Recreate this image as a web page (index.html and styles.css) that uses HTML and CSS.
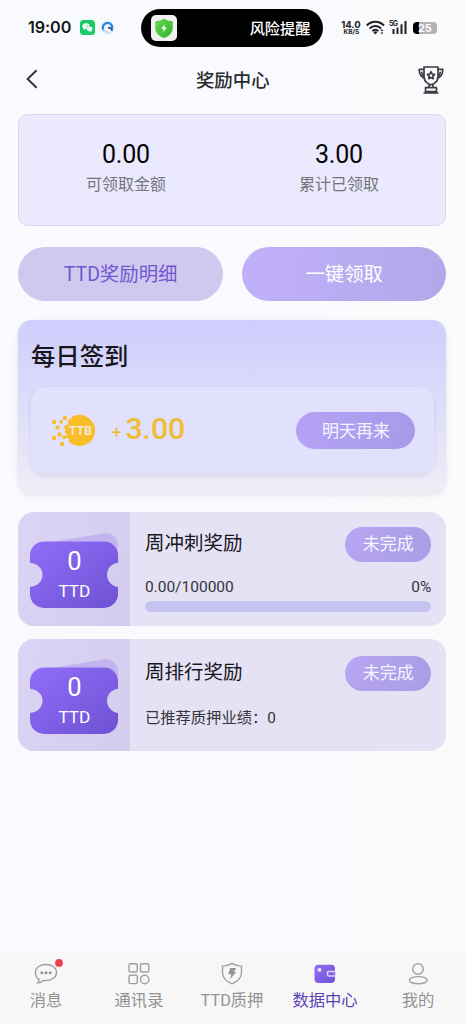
FILE: index.html
```html
<!DOCTYPE html>
<html lang="zh-CN">
<head>
<meta charset="utf-8">
<meta name="viewport" content="width=device-width, initial-scale=1">
<title>奖励中心</title>
<link rel="stylesheet" href="styles.css">
</head>
<body>
<div class="screen">
  <div class="status">
    <div class="status-left">
      <span class="clock">19:00</span>
      <svg class="app-icon" viewBox="0 0 15 15"><rect width="15" height="15" rx="3.5" fill="#1bc968"/><ellipse cx="6.1" cy="6.2" rx="3.6" ry="3" fill="#fff"/><path d="M3.8 8l-.4 2 2-1z" fill="#fff"/><ellipse cx="9.5" cy="8.8" rx="3.2" ry="2.6" fill="#fff" stroke="#1bc968" stroke-width=".6"/><path d="M11 10.5l.8 1.5-2-.7z" fill="#fff"/><g fill="#1bc968"><circle cx="4.9" cy="5.3" r=".5"/><circle cx="7.3" cy="5.3" r=".5"/><circle cx="8.5" cy="8.2" r=".4"/><circle cx="10.5" cy="8.2" r=".4"/></g></svg>
      <svg class="app-icon cloud" viewBox="0 0 15 15"><rect width="15" height="15" rx="3.5" fill="#f5f7fa"/><path d="M2 10.500c2-1.900 4-.3 5.600 1.100s3.500 1.500 5.400-.1C12 15 4 14 2 10.500z" fill="#b9dcf8"/><path d="M3.200 9.800A4.800 4.800 0 1 1 12.200 8.800" fill="none" stroke="#2c84e6" stroke-width="2.400"/><path d="M8 7.600c2 0 3.900 1 4.300 3.400" fill="none" stroke="#1a559f" stroke-width="1.600"/></svg>
    </div>
    <div class="island">
      <svg class="guard" viewBox="0 0 26 26"><defs><linearGradient id="green" x2="1" y2="1"><stop stop-color="#66d94e"/><stop offset="1" stop-color="#30b42c"/></linearGradient></defs><rect width="26" height="26" rx="5" fill="#f0f1f0"/><path d="M13 3.600c2.500 1.800 5 2.400 8.700 2.600v7.200c0 4.500-3.800 7.600-8.700 9.700-4.900-2.100-8.700-5.200-8.700-9.700V6.200C8 6 10.500 5.400 13 3.600z" fill="url(#green)"/><path d="M13.800 9.300l-3.600 4.400h2.500l-.7 3.500 3.900-4.600h-2.500z" fill="#fff"/></svg>
      <span>风险提醒</span>
    </div>
    <div class="status-right">
      <div class="speed"><b>14.0</b><small>KB/S</small></div>
      <svg class="wifi" viewBox="0 0 19 16"><g fill="none" stroke="#202124" stroke-width="1.900"><path d="M.7 5.500C5.400.4 13.300.4 18 5.500M3.600 8.500c3.200-3.400 8.300-3.400 11.500 0M6.300 11.100c1.800-1.900 4.300-1.900 6.100 0"/></g><path d="M7.300 12.300a3 3 0 0 1 4.100 0l-2 2.100zM14.400 11l1.500-1.900 1.500 1.900zM14.400 12.400l1.500 1.900 1.500-1.900z" fill="#202124"/></svg>
      <svg class="signal" viewBox="0 0 19 16"><text x="0" y="6.300" font-size="7" font-weight="700" textLength="9">5G</text><g fill="#202124"><rect x="3.500" y="9" width="2" height="5"/><rect x="7.500" y="7.500" width="2" height="6.500"/><rect x="11.500" y="4.300" width="2" height="9.700"/><rect x="15.500" y="1" width="2" height="13"/></g></svg>
      <div class="battery">25</div>
    </div>
  </div>

  <header class="header">
    <svg class="back" viewBox="0 0 12 20"><path d="M10.600 1.200L1.600 10l9 8.800" fill="none" stroke="#303238" stroke-width="1.900"/></svg>
    <h1>奖励中心</h1>
    <svg class="trophy" viewBox="0 0 26 28" fill="none" stroke="#3b3d42" stroke-width="1.700" stroke-linejoin="round"><path d="M6 1h14v9.500c0 4-2 7-7 8.300-5-1.300-7-4.300-7-8.300zM6 3.300H1.200c0 5 1.200 7.800 6.200 9.500M3.500 5.700c.2 2.500 1 3.500 2.700 4.500M20 3.300h4.800c0 5-1.200 7.800-6.200 9.500M22.500 5.700c-.2 2.500-1 3.500-2.700 4.500M11 18.300v3.400h4v-3.400M7.500 21.700h11v4h-11zM5.500 27h15"/><path d="M13 5.700l1.100 2.300 2.500.4-1.800 1.800.4 2.500-2.200-1.200-2.200 1.200.4-2.500-1.800-1.800 2.500-.4z"/></svg>
  </header>

  <main>
    <section class="totals">
      <div class="total"><strong>0.00</strong><span>可领取金额</span></div>
      <div class="total"><strong>3.00</strong><span>累计已领取</span></div>
    </section>

    <div class="actions">
      <button class="detail">TTD奖励明细</button>
      <button class="claim">一键领取</button>
    </div>

    <section class="checkin">
      <h2>每日签到</h2>
      <div class="checkin-row">
        <svg class="coin" viewBox="0 0 44 34"><g fill="#f9be27"><path d="M18 5.500l2.500-1.500 1-1.500A15.600 15.600 0 1 1 20 29.500l-2.500-2 .5-2.500-3-1.500 1-3.500-2.500-1.500 1-3-2-2.500 2.500-2 3-.5-1.500-3z"/><rect x="1" y="6" width="4" height="4" rx="1.200"/><rect x="4.500" y="11.500" width="4" height="4" rx="1.200"/><rect x="12" y="2" width="4" height="4" rx="1.200"/><rect x="8.500" y="6" width="3.500" height="3.500" rx="1.200"/><rect x="6.500" y="18.500" width="4" height="4" rx="1.200"/><rect x="1" y="22" width="4" height="4" rx="1.200"/><rect x="9" y="28" width="4" height="4" rx="1.200"/><rect x="11.500" y="21.500" width="3.500" height="3.500" rx="1.200"/></g><text x="18" y="21.300" textLength="23" font-size="12" font-weight="700" fill="#f5e9df">TTB</text></svg>
        <div class="amount"><span>+</span><b>3.00</b></div>
        <button class="tomorrow">明天再来</button>
      </div>
    </section>

    <section class="task sprint">
      <div class="ticket-side">
        <div class="ticket">
          <svg viewBox="0 0 88 75"><defs><linearGradient id="ticket1" x2="1" y2="1"><stop stop-color="#916df9"/><stop offset="1" stop-color="#6e52d3"/></linearGradient></defs><path d="M25 8.500L73 .6c9-1.400 14 3.400 15 12.400v12H25z" fill="#c2b4f0"/><path d="M14 8.500h60a14 14 0 0 1 14 14v7.300c-6 .5-11 5.500-11 11.900s5 11.700 11 12.200v7a14 14 0 0 1-14 14H14a14 14 0 0 1-14-14v-7c7-.5 12.500-5.500 12.500-12.200S7 30.300 0 29.800v-7.300a14 14 0 0 1 14-14z" fill="url(#ticket1)"/></svg>
          <div class="ticket-label"><strong>0</strong><span>TTD</span></div>
        </div>
      </div>
      <div class="task-body">
        <div class="task-head"><h3>周冲刺奖励</h3><span class="pending">未完成</span></div>
        <div class="progress-text"><span>0.00/100000</span><span>0%</span></div>
        <div class="progress"></div>
      </div>
    </section>

    <section class="task ranking">
      <div class="ticket-side">
        <div class="ticket">
          <svg viewBox="0 0 88 75"><path d="M25 8.500L73 .6c9-1.400 14 3.400 15 12.400v12H25z" fill="#c2b4f0"/><path d="M14 8.500h60a14 14 0 0 1 14 14v7.300c-6 .5-11 5.500-11 11.900s5 11.700 11 12.200v7a14 14 0 0 1-14 14H14a14 14 0 0 1-14-14v-7c7-.5 12.500-5.500 12.500-12.200S7 30.300 0 29.800v-7.300a14 14 0 0 1 14-14z" fill="url(#ticket1)"/></svg>
          <div class="ticket-label"><strong>0</strong><span>TTD</span></div>
        </div>
      </div>
      <div class="task-body">
        <div class="task-head"><h3>周排行奖励</h3><span class="pending">未完成</span></div>
        <p class="performance">已推荐质押业绩：0</p>
      </div>
    </section>
  </main>

  <nav class="tabs">
    <a class="tab"><svg viewBox="0 0 28 26"><path d="M14 4.500c6.200 0 10.500 3.300 10.500 8s-4.300 8.100-10.500 8.100c-1 0-1.900 0-2.700-.2-1.600 1.600-3.700 2.400-5.700 2.500 1-.9 1.500-2 1.500-3.500-2.300-1.400-3.600-4-3.600-6.900 0-4.700 4.300-8 10.500-8z"/><g class="solid"><circle cx="9.800" cy="12.700" r="1.500"/><circle cx="14" cy="12.700" r="1.500"/><circle cx="18.200" cy="12.700" r="1.500"/></g><circle class="alert" cx="27" cy="2.900" r="3.900"/></svg><span>消息</span></a>
    <a class="tab"><svg viewBox="0 0 28 26"><rect x="4" y="3.700" width="8.300" height="8.300" rx="1.500"/><rect x="15.500" y="3.700" width="8.300" height="8.300" rx="1.500"/><rect x="4" y="15.300" width="8.300" height="8.300" rx="1.500"/><circle cx="19.700" cy="19.500" r="4.200"/></svg><span>通讯录</span></a>
    <a class="tab"><svg viewBox="0 0 28 26"><path d="M14 3.300c3 2 5.800 2.700 9.500 2.800v6.700c0 5-3.700 8.600-9.500 11-5.800-2.400-9.500-6-9.500-11V6.100C8.200 6 11 5.300 14 3.300z"/><path class="solid" d="M12.300 8h6l-2.300 4h2.300L12 19.300l1.200-5h-3z"/></svg><span>TTD质押</span></a>
    <a class="tab active"><svg viewBox="0 0 28 26"><defs><linearGradient id="wallet" x2="1" y2="1"><stop stop-color="#9170f6"/><stop offset="1" stop-color="#6e50d4"/></linearGradient></defs><rect x="3.500" y="4.800" width="20.500" height="18.200" rx="4" fill="url(#wallet)" stroke="none"/><rect x="6.500" y="8" width="3.800" height="3.800" rx="1" fill="#e1d9fa" stroke="none"/><rect x="16.500" y="11.500" width="8" height="4.500" rx="1" fill="#8060e5" stroke="#ddd4fa" stroke-width="1.500"/></svg><span>数据中心</span></a>
    <a class="tab"><svg viewBox="0 0 28 26"><circle cx="14" cy="9" r="5.300"/><ellipse cx="14.300" cy="20.200" rx="9" ry="3.600"/></svg><span>我的</span></a>
  </nav>
</div>
</body>
</html>
```
FILE: styles.css
```css
* { box-sizing: border-box; }
body { margin: 0; background: #f9fafd; font-family: Roboto, "Noto Sans CJK SC", sans-serif; color: #16161b; }
button { border: 0; padding: 0; font: inherit; }
h1, h2, h3, p { margin: 0; }
svg { display: block; overflow: visible; flex: none; }
.screen { height: 1024px; display: flex; flex-direction: column; background: linear-gradient(90deg, #f9fafd 70%, #f9fbfb); }

.status { height: 55px; display: flex; align-items: center; }
.status-left { width: 141.4px; padding-left: 28px; display: flex; align-items: center; }
.clock { font: 600 16.2px/20px Inter, sans-serif; width: 52px; letter-spacing: -.1px; margin-top: -1px; }
.app-icon { width: 15px; height: 15px; }
.cloud { margin-left: 5px; }
.island { width: 182px; height: 38px; padding: 0 13px 0 10px; border-radius: 19px; background: #000; color: #fff; display: flex; align-items: center; justify-content: space-between; font: 500 15.2px/24px "Noto Sans CJK SC", sans-serif; }
.island span { margin-top: -1px; }
.guard { width: 26px; height: 26px; }
.status-right { margin-left: 18.500px; display: flex; align-items: center; color: #202124; }
.speed { width: 19px; font-family: Inter, sans-serif; text-align: center; }
.speed b, .speed small { display: block; white-space: nowrap; }
.speed b { font-size: 9.500px; line-height: 8px; margin-left: -1px; }
.speed small { font-size: 6.500px; font-weight: 700; line-height: 6px; }
.wifi { width: 19px; height: 16px; margin-left: 5px; }
.signal { width: 19px; height: 16px; margin-left: 4px; font-family: Inter, sans-serif; fill: #202124; }
.battery { width: 24px; height: 12px; margin-left: 5px; border-radius: 4px; background: linear-gradient(90deg, #000 25%, #b1b2b4 25%); color: #fff; font: 700 11px/12px Inter, sans-serif; text-align: center; }

.header { height: 49px; padding: 0 20.500px 0 26px; display: flex; align-items: center; justify-content: space-between; }
.header h1 { font: 500 18.400px/28px "Noto Sans CJK SC", sans-serif; color: #292a30; margin: -2px 0 0 9px; }
.back { width: 12px; height: 20px; margin-top: -1px; }
.trophy { width: 26px; height: 28px; margin-top: 1px; }

main { flex: 1; padding: 10px 18.600px 0 18.400px; }
.totals { height: 112px; border: 1px solid #d9d6ef; border-radius: 10px; background: #eae9fe; display: flex; }
.total { flex: 1; display: flex; flex-direction: column; align-items: center; padding-top: 25px; }
.total strong { font-size: 25px; line-height: 29px; font-weight: 400; color: #050508; letter-spacing: -.2px; }
.total span { font-size: 16px; line-height: 24px; color: #75757d; margin-top: 4px; }
.actions { display: flex; gap: 19px; margin-top: 21px; }
.actions button { flex: 1; height: 54px; border-radius: 27px; font-size: 19.400px; padding-bottom: 3px; }
.detail { background: #d1c8f0; color: #6d58cd; }
.claim { background: linear-gradient(90deg, #c1b0fa, #b2a8e9); color: #fff; }

.checkin { height: 173px; margin-top: 19px; padding: 18px 12.500px; border-radius: 14px; background: linear-gradient(#cecdfd, #eeedf7); box-shadow: 0 2px 5px rgba(60, 60, 80, .12); }
.checkin h2 { height: 37px; margin-bottom: 12px; font-size: 24.400px; line-height: 37px; font-weight: 500; color: #16161b; }
.checkin-row { height: 87px; padding: 0 18.500px 0 21.500px; border-radius: 15px; background: #e1e0fd; box-shadow: 0 2px 5px rgba(60, 60, 80, .11); display: flex; align-items: center; }
.coin { width: 44px; height: 34px; margin-left: -1.500px; }
.amount { display: flex; align-items: baseline; color: #eebd32; margin: -4px auto 0 16.500px; }
.amount span { width: 14px; font-size: 18px; }
.amount b { font-size: 30.200px; line-height: 36px; font-weight: 500; }
.tomorrow { width: 119px; height: 37px; padding-bottom: 2px; border-radius: 19px; background: linear-gradient(100deg, #b5a2f6, #a69be9); color: #f6f4ff; font-size: 17px; }

.task { display: flex; border-radius: 16px; background: #e5e2f5; overflow: hidden; }
.sprint { height: 114px; margin-top: 19.300px; }
.ranking { height: 112px; margin-top: 12.700px; }
.ticket-side { width: 111.500px; padding: 21px 12px 0; background: linear-gradient(110deg, #dcd4f4, #d2ccee); }
.ticket { width: 88px; height: 75px; display: grid; }
.ticket > * { grid-area: 1 / 1; }
.ticket-label { z-index: 1; padding-top: 13px; color: #fff; display: flex; flex-direction: column; align-items: center; }
.ticket-label strong { font-size: 25.500px; line-height: 30px; font-weight: 400; }
.ticket-label span { font-size: 17.200px; line-height: 22px; margin-top: 4px; }
.ranking .ticket-side { padding-top: 20px; }
.task-body { flex: 1; padding: 14.500px 15px 0; }
.task-head { height: 35px; display: flex; align-items: center; justify-content: space-between; }
.task-head h3 { font-size: 19.500px; line-height: 30px; font-weight: 400; color: #17171c; margin-top: -1px; }
.pending { width: 86.500px; height: 35px; border-radius: 18px; background: linear-gradient(110deg, #b7a5f2, #a99de6); color: #f7f5ff; font-size: 17px; line-height: 34px; text-align: center; }
.progress-text { display: flex; justify-content: space-between; margin-top: 15.500px; font-size: 15.500px; line-height: 20px; color: #34343b; }
.progress { height: 10.500px; margin-top: 4px; border-radius: 6px; background: #c5c4f0; }
.ranking .task-body { padding-top: 17px; }
.ranking h3 { margin-top: 0; }
.performance { font-size: 15.300px; line-height: 22px; margin-top: 16px; color: #34343b; }

.tabs { height: 73px; background: #f7f7f7; display: grid; grid-template-columns: repeat(5, 1fr); }
.tab { padding: 9px 1px 0 0; color: #939393; display: flex; flex-direction: column; align-items: center; }
.tab svg { width: 28px; height: 26px; fill: none; stroke: #a0a0a0; stroke-width: 1.400; }
.tab .solid { fill: #969696; stroke: none; }
.tab .alert { fill: #ee4055; stroke: none; }
.tab span { font-size: 16.300px; line-height: 24px; margin-top: 3px; }
.tab.active { color: #5943b5; }
```
